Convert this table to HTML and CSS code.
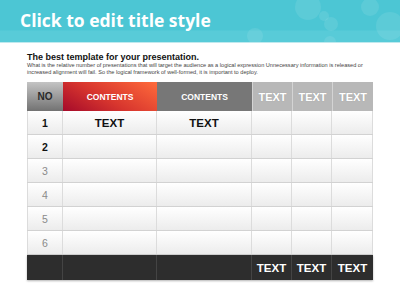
FILE: index.html
```html
<!doctype html>
<html lang="en">
<head>
    <meta charset="utf-8">
    <title>Table Slide</title>
    <link rel="stylesheet" href="styles.css">
</head>
<body>
    <div class="title-band">
        <h1>Click to edit title style</h1>
        <svg class="bubbles" width="400" height="42" viewBox="0 0 400 42">
            <circle cx="308" cy="7" r="13" />
            <circle cx="324" cy="16" r="5" />
            <circle cx="331" cy="24" r="7" />
            <circle cx="370" cy="7" r="9" />
            <circle cx="390" cy="26" r="14" />
            <circle cx="255" cy="36" r="8" />
            <circle cx="330" cy="42" r="6" />
        </svg>
    </div>
    <div class="content">
        <h2>The best template for your presentation.</h2>
        <p class="lead">What is the relative number of presentations that will target the audience as a logical expression Unnecessary information is released or increased alignment will fail. So the logical framework of well-formed, it is important to deploy.</p>

        <div class="grid">
            <div class="row head">
                <div class="cell no">NO</div>
                <div class="cell red">CONTENTS</div>
                <div class="cell dark">CONTENTS</div>
                <div class="cell light">TEXT</div>
                <div class="cell light">TEXT</div>
                <div class="cell light">TEXT</div>
            </div>
            <div class="row body">
                <div class="cell num strong">1</div>
                <div class="cell val">TEXT</div>
                <div class="cell val">TEXT</div>
                <div class="cell"></div>
                <div class="cell"></div>
                <div class="cell"></div>
            </div>
            <div class="row body">
                <div class="cell num strong">2</div>
                <div class="cell"></div>
                <div class="cell"></div>
                <div class="cell"></div>
                <div class="cell"></div>
                <div class="cell"></div>
            </div>
            <div class="row body">
                <div class="cell num">3</div>
                <div class="cell"></div>
                <div class="cell"></div>
                <div class="cell"></div>
                <div class="cell"></div>
                <div class="cell"></div>
            </div>
            <div class="row body">
                <div class="cell num">4</div>
                <div class="cell"></div>
                <div class="cell"></div>
                <div class="cell"></div>
                <div class="cell"></div>
                <div class="cell"></div>
            </div>
            <div class="row body">
                <div class="cell num">5</div>
                <div class="cell"></div>
                <div class="cell"></div>
                <div class="cell"></div>
                <div class="cell"></div>
                <div class="cell"></div>
            </div>
            <div class="row body last">
                <div class="cell num">6</div>
                <div class="cell"></div>
                <div class="cell"></div>
                <div class="cell"></div>
                <div class="cell"></div>
                <div class="cell"></div>
            </div>
            <div class="row foot">
                <div class="cell"></div>
                <div class="cell"></div>
                <div class="cell"></div>
                <div class="cell">TEXT</div>
                <div class="cell">TEXT</div>
                <div class="cell">TEXT</div>
            </div>
        </div>
    </div>
</body>
</html>
```

FILE: styles.css
```css
body {
    margin: 0;
    width: 400px;
    height: 300px;
    overflow: hidden;
    background-color: #ffffff;
    font-family: "Liberation Sans", Arial, sans-serif;
}
.title-band {
    position: relative;
    height: 42px;
    background: linear-gradient(to bottom, #4cc6d4 0, #4cc6d4 30px, #58cbd8 31px, #58cbd8 100%);
    border-bottom: 1px solid #bfe9ee;
    display: flex;
    align-items: center;
    overflow: hidden;
}
.title-band h1 {
    margin: 0 0 3px 20px;
    font-family: "Open Sans", sans-serif;
    font-size: 17.5px;
    font-weight: bold;
    color: #ffffff;
    position: relative;
    z-index: 1;
}
.bubbles {
    position: absolute;
    left: 0;
    top: 0;
}
.bubbles circle {
    fill: rgba(255, 255, 255, 0.09);
}
.content {
    padding: 9px 27px 0 27px;
}
.content h2 {
    margin: 0;
    font-size: 9px;
    font-weight: bold;
    color: #111111;
    line-height: 10px;
}
.lead {
    margin: 0 0 6px 0;
    font-size: 5.6px;
    line-height: 7px;
    color: #444444;
}
.grid {
    width: 346px;
    display: flex;
    flex-direction: column;
}
.row {
    display: grid;
    grid-template-columns: 36px 94px 95px 40px 40px 41px;
}
.cell {
    display: flex;
    align-items: center;
    justify-content: center;
    font-weight: bold;
}
.head {
    height: 29px;
    font-size: 8.5px;
    color: #ffffff;
}
.head .no {
    background: linear-gradient(to bottom, #c4c4c4, #727272);
    color: #2a2a2a;
    font-size: 10px;
}
.head .red {
    background: linear-gradient(30deg, #a50a2a 0%, #d8362e 45%, #ff6b3b 100%);
}
.head .dark {
    background: #777777;
}
.head .light {
    background: #b8b8b8;
    border-left: 1px solid #d4d4d4;
    font-size: 11px;
    text-shadow: 0 0 1px #999999;
}
.body {
    height: 23px;
    border-bottom: 1px solid #d2d2d2;
    background: linear-gradient(to bottom, #ffffff, #ececec);
}
.body .cell {
    border-right: 1px solid #dcdcdc;
}
.body .cell:first-child {
    border-left: 1px solid #dcdcdc;
}
.body .num {
    font-size: 10.5px;
    font-weight: normal;
    color: #8a8a8a;
}
.body .strong {
    font-weight: bold;
    color: #111111;
}
.body .val {
    font-size: 11.5px;
    color: #111111;
}
.foot {
    height: 25px;
    background: #2d2d2d;
    color: #ffffff;
    font-size: 11.5px;
    box-shadow: 0 1px 2px rgba(0, 0, 0, 0.3);
}
.foot .cell {
    border-right: 1px solid #444444;
}
.foot .cell:last-child {
    border-right: none;
}
```
